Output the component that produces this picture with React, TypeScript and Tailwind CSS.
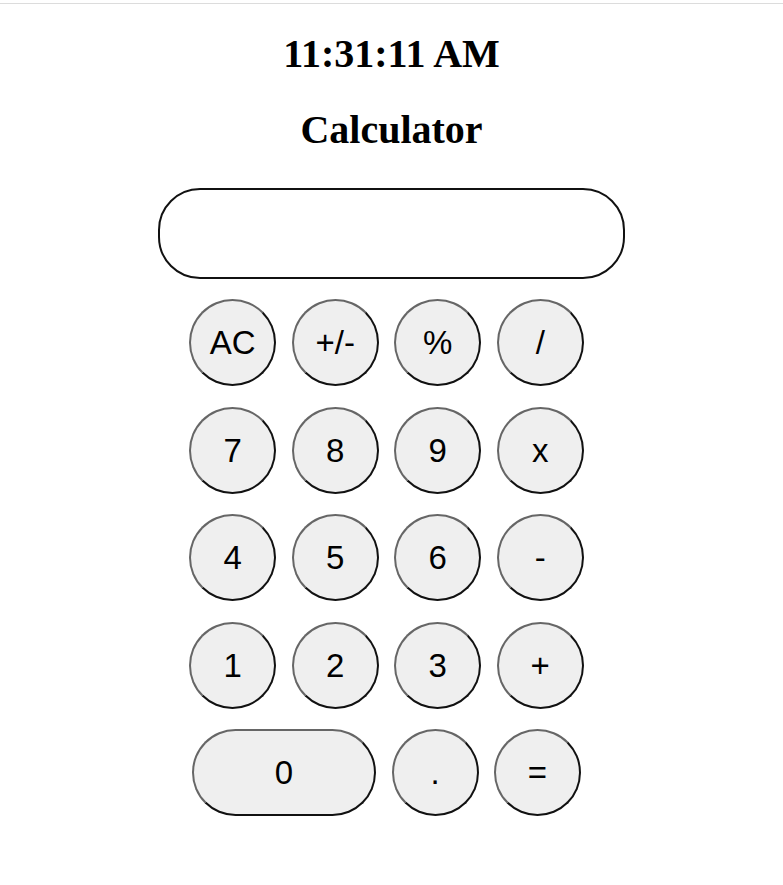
import React from "react";

type Key = {
  label: string;
  wide?: boolean;
};

const rows: Key[][] = [
  [{ label: "AC" }, { label: "+/-" }, { label: "%" }, { label: "/" }],
  [{ label: "7" }, { label: "8" }, { label: "9" }, { label: "x" }],
  [{ label: "4" }, { label: "5" }, { label: "6" }, { label: "-" }],
  [{ label: "1" }, { label: "2" }, { label: "3" }, { label: "+" }],
  [{ label: "0", wide: true }, { label: "." }, { label: "=" }],
];

function CalcButton({ label, wide }: Key) {
  return (
    <button
      type="button"
      className={
        (wide ? "w-[184px] " : "w-[87px] ") +
        "h-[87px] rounded-full bg-[#efefef] border-2 border-t-[#666666] border-l-[#666666] border-r-[#111111] border-b-[#111111] text-[33px] leading-none text-black font-['Liberation_Sans',Arial,sans-serif]"
      }
    >
      {label}
    </button>
  );
}

export default function App() {
  return (
    <div className="min-h-screen bg-white font-['Liberation_Serif','Times_New_Roman',serif]">
      <div className="mt-[3px] h-px bg-[#dcdcdc]"></div>
      <h1 className="mt-[30px] text-center text-[40px] leading-[40px] font-bold text-black">
        11:31:11 AM
      </h1>
      <h2 className="mt-[36px] text-center text-[40px] leading-[40px] font-bold text-black">
        Calculator
      </h2>
      <div className="mt-[38px] flex justify-center">
        <div className="w-[467px] h-[91px] rounded-[42px] border-2 border-[#111111] bg-white"></div>
      </div>
      <div className="mt-[20px] pr-[10px] flex flex-col items-center gap-y-[20.5px]">
        {rows.map((row, i) => (
          <div key={i} className="flex justify-center gap-x-[15.5px]">
            {row.map((k) => (
              <CalcButton key={k.label} {...k} />
            ))}
          </div>
        ))}
      </div>
    </div>
  );
}
